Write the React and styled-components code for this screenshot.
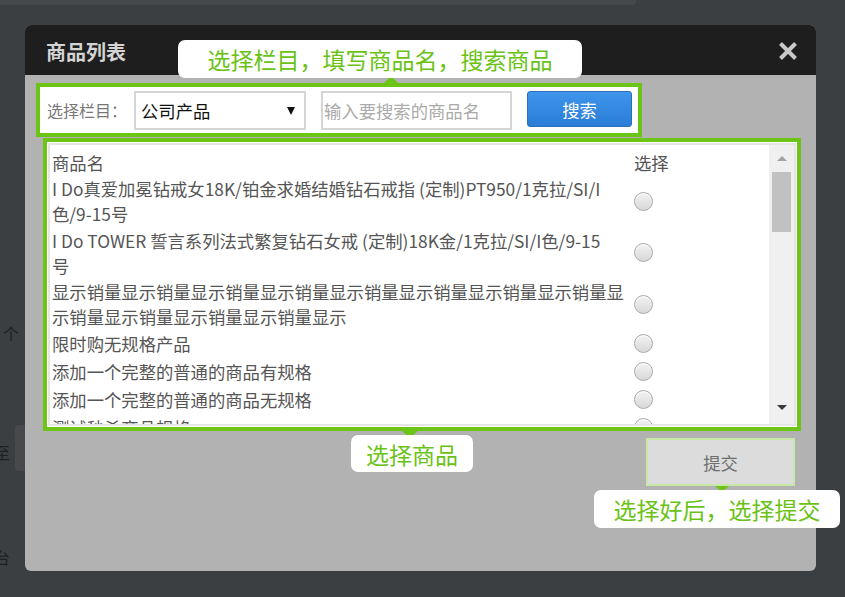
import React from "react";
import styled, { createGlobalStyle } from "styled-components";

const GREEN = "#6bc416";
const FONT = `"Noto Sans CJK SC", "Microsoft YaHei", "Liberation Sans", sans-serif`;

const GlobalStyle = createGlobalStyle`
  html, body {
    margin: 0;
    padding: 0;
  }
  body {
    background: #3b3f42;
    font-family: ${FONT};
  }
`;

const Page = styled.div`
  position: relative;
  width: 845px;
  height: 597px;
  overflow: hidden;
  box-sizing: border-box;
  padding: 25px 0 0 25px;
  background: #3b3f42;
`;

/* bits of the page that sits under the overlay */
const TopStrip = styled.div`
  position: absolute;
  top: 0;
  left: 0;
  width: 636px;
  height: 5px;
  background: #46494c;
  border-bottom-right-radius: 4px;
`;

const UnderText = styled.span`
  position: absolute;
  left: ${(p) => p.$x}px;
  top: ${(p) => p.$y}px;
  font-size: 16px;
  line-height: 20px;
  color: #1d1f21;
`;

const UnderField = styled.div`
  position: absolute;
  left: 15px;
  top: 425px;
  width: 16px;
  height: 46px;
  border-radius: 4px;
  background: #48494b;
`;

const Modal = styled.div`
  position: relative;
  width: 791px;
  height: 546px;
  display: flex;
  flex-direction: column;
  border-radius: 6px;
  background: #b2b2b2;
`;

const Header = styled.div`
  height: 50px;
  box-sizing: border-box;
  display: flex;
  align-items: center;
  justify-content: space-between;
  padding: 2px 18px 0 21px;
  background: #1e1e1e;
  border-radius: 6px 6px 0 0;
`;

const Title = styled.h2`
  margin: 0;
  font-size: 20px;
  font-weight: 700;
  color: #d4d4d4;
`;

const CloseButton = styled.button`
  width: 20px;
  height: 20px;
  padding: 0;
  border: 0;
  background: none;
  display: flex;
`;

const Body = styled.div`
  flex: 1;
  display: flex;
  flex-direction: column;
  align-items: flex-start;
  padding: 8px 0 0 11px;
`;

const SearchBar = styled.div`
  position: relative;
  width: 606px;
  height: 54px;
  box-sizing: border-box;
  display: flex;
  align-items: flex-start;
  padding: 4px 6px 0 7px;
  border: 4px solid ${GREEN};
  background: #fff;

  &::before {
    content: "";
    position: absolute;
    left: 344px;
    top: -11px;
    border-left: 7px solid transparent;
    border-right: 7px solid transparent;
    border-bottom: 7px solid ${GREEN};
  }
`;

const Label = styled.span`
  font-size: 16px;
  line-height: 39px;
  color: #777;
  margin-right: 7px;
  white-space: nowrap;
`;

const Select = styled.div`
  width: 172px;
  height: 39px;
  box-sizing: border-box;
  display: flex;
  align-items: center;
  justify-content: space-between;
  padding: 0 9px 0 5px;
  border: 2px solid #d5d5d5;
  font-size: 13pt;
  color: #111;
`;

const Caret = styled.span`
  width: 0;
  height: 0;
  border-left: 4px solid transparent;
  border-right: 4px solid transparent;
  border-top: 8px solid #111;
`;

const SearchInput = styled.input`
  width: 191px;
  height: 39px;
  box-sizing: border-box;
  margin: 0 0 0 15px;
  padding: 0 0 0 1px;
  border: 2px solid #d5d5d5;
  outline: none;
  font-family: ${FONT};
  font-size: 13pt;
  color: #333;

  &::placeholder {
    color: #aaa;
  }
`;

const SearchButton = styled.button`
  width: 105px;
  height: 36px;
  margin-left: 15px;
  border: 1px solid #2a70be;
  border-radius: 3px;
  background: linear-gradient(#3e95ea, #2a7dd6);
  color: #fff;
  font-family: ${FONT};
  font-size: 13pt;
  padding: 0;
`;

const ListBox = styled.div`
  position: relative;
  width: 758px;
  height: 293px;
  box-sizing: border-box;
  margin: 1px 0 0 7px;
  padding: 1px;
  border: 4px solid ${GREEN};
  background: #fff;

  &::after {
    content: "";
    position: absolute;
    left: 355px;
    bottom: -11px;
    border-left: 8px solid transparent;
    border-right: 8px solid transparent;
    border-top: 7px solid ${GREEN};
  }
`;

const ListFrame = styled.div`
  height: 100%;
  box-sizing: border-box;
  display: flex;
  border: 2px solid #e5e5e5;
  overflow: hidden;
`;

const ListContent = styled.div`
  flex: 1;
  overflow: hidden;
  color: #555;
  font-size: 13pt;
`;

const Row = styled.div`
  display: grid;
  grid-template-columns: 573px 1fr;
  column-gap: 9px;
  align-items: center;
  padding: ${(p) => (p.$head ? "5px 0 0 2px" : "1px 0 0.5px 2px")};
`;

const Name = styled.div`
  line-height: 25px;
`;

const Line = styled.span`
  display: block;
  white-space: nowrap;
`;

const Choice = styled.div`
  display: flex;
  align-items: center;
  min-height: ${(p) => (p.$head ? "25px" : "26.5px")};
  line-height: 25px;
`;

const Radio = styled.input`
  appearance: none;
  width: 19px;
  height: 19px;
  margin: 0;
  border-radius: 50%;
  border: 1px solid #a9a9a9;
  background: linear-gradient(#f3f3f3, #d8d8d8);
  box-shadow: inset 0 1px 1px #fff;
`;

const Scrollbar = styled.div`
  width: 25px;
  display: flex;
  flex-direction: column;
  align-items: center;
  background: #f0f0f0;
`;

const ScrollArrow = styled.div`
  height: ${(p) => p.$h}px;
  width: 100%;
  display: flex;
  align-items: center;
  justify-content: center;

  &::before {
    content: "";
    border-left: 5px solid transparent;
    border-right: 5px solid transparent;
    ${(p) =>
      p.$down
        ? "border-top: 5px solid #3a3a3a;"
        : "border-bottom: 5px solid #a3a3a3;"}
  }
`;

const Thumb = styled.div`
  width: 19px;
  height: 60px;
  margin-top: 1px;
  background: #c1c1c1;
`;

const Spacer = styled.div`
  flex: 1;
`;

const Footer = styled.div`
  align-self: stretch;
  display: flex;
  justify-content: flex-end;
  margin-top: 7px;
  padding-right: 21px;
`;

const SubmitButton = styled.button`
  position: relative;
  width: 149px;
  height: 48px;
  padding: 0;
  border: 2px solid #c8e8a8;
  background: #dcdcdc;
  color: #6f6f6f;
  font-family: ${FONT};
  font-size: 13pt;

  &::after {
    content: "";
    position: absolute;
    left: 67px;
    bottom: -8px;
    border-left: 7px solid transparent;
    border-right: 7px solid transparent;
    border-top: 6px solid ${GREEN};
  }
`;

const Tip = styled.div`
  position: absolute;
  left: ${(p) => p.$x}px;
  top: ${(p) => p.$y}px;
  width: ${(p) => p.$w}px;
  height: ${(p) => p.$h || 38}px;
  display: flex;
  align-items: center;
  justify-content: center;
  border-radius: 7px;
  background: #fff;
  color: #69c214;
  font-size: 23px;
  white-space: nowrap;
`;

const goods = [
  ["I Do真爱加冕钻戒女18K/铂金求婚结婚钻石戒指 (定制)PT950/1克拉/SI/I", "色/9-15号"],
  ["I Do TOWER 誓言系列法式繁复钻石女戒 (定制)18K金/1克拉/SI/I色/9-15", "号"],
  [
    "显示销量显示销量显示销量显示销量显示销量显示销量显示销量显示销量显",
    "示销量显示销量显示销量显示销量显示",
  ],
  ["限时购无规格产品"],
  ["添加一个完整的普通的商品有规格"],
  ["添加一个完整的普通的商品无规格"],
  ["测试秒杀商品规格"],
];

const CloseIcon = () => (
  <svg width="20" height="20" viewBox="0 0 20 20">
    <path d="M2.5 2.5 L17.5 17.5 M17.5 2.5 L2.5 17.5" stroke="#c9c9c9" strokeWidth="4" />
  </svg>
);

export default function App() {
  return (
    <Page>
      <GlobalStyle />
      <TopStrip />
      <UnderText $x={3} $y={323}>个</UnderText>
      <UnderText $x={-6} $y={442}>至</UnderText>
      <UnderText $x={-6} $y={547}>台</UnderText>
      <UnderField />

      <Modal>
        <Header>
          <Title>商品列表</Title>
          <CloseButton aria-label="关闭">
            <CloseIcon />
          </CloseButton>
        </Header>

        <Body>
          <SearchBar>
            <Label>选择栏目：</Label>
            <Select>
              公司产品
              <Caret />
            </Select>
            <SearchInput placeholder="输入要搜索的商品名" />
            <SearchButton>搜索</SearchButton>
          </SearchBar>

          <ListBox>
            <ListFrame>
              <ListContent>
                <Row $head>
                  <Name>商品名</Name>
                  <Choice $head>选择</Choice>
                </Row>
                {goods.map((lines, i) => (
                  <Row key={i}>
                    <Name>
                      {lines.map((l, j) => (
                        <Line key={j}>{l}</Line>
                      ))}
                    </Name>
                    <Choice>
                      <Radio type="radio" name="goods" />
                    </Choice>
                  </Row>
                ))}
              </ListContent>
              <Scrollbar>
                <ScrollArrow $h={26} />
                <Thumb />
                <Spacer />
                <ScrollArrow $h={34} $down />
              </Scrollbar>
            </ListFrame>
          </ListBox>

          <Footer>
            <SubmitButton>提交</SubmitButton>
          </Footer>
        </Body>

        <Tip $x={153} $y={15} $w={404}>选择栏目，填写商品名，搜索商品</Tip>
        <Tip $x={326} $y={410} $w={122} $h={37}>选择商品</Tip>
        <Tip $x={569} $y={465} $w={246}>选择好后，选择提交</Tip>
      </Modal>
    </Page>
  );
}
